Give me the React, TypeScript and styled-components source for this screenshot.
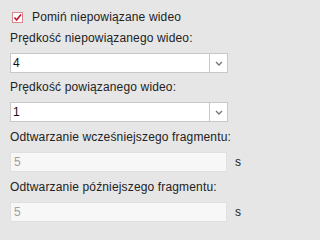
import styled, { createGlobalStyle } from "styled-components";

const GlobalStyle = createGlobalStyle`
  html, body {
    margin: 0;
    padding: 0;
    background: #e6e6e6;
  }
  body {
    font-family: "Liberation Sans", Arial, sans-serif;
    font-size: 12px;
    letter-spacing: 0.15px;
    color: #222;
  }
`;

const Panel = styled.div`
  width: 251px;
  height: 230px;
  box-sizing: border-box;
  padding: 10px 0 0 10px;
  background: #e6e6e6;
`;

const CheckRow = styled.label`
  display: flex;
  align-items: center;
  gap: 9px;
  height: 15px;
  line-height: 15px;
  padding-left: 2px;
  margin-bottom: 6px;
`;

const CheckBox = styled.span`
  position: relative;
  width: 11px;
  height: 11px;
  box-sizing: border-box;
  border: 1px solid #d9888c;
  background: #fff;
  flex-shrink: 0;
`;

const Group = styled.div<{ $top: number }>`
  display: flex;
  flex-direction: column;
  gap: 7px;
  margin-top: ${(p) => p.$top}px;
`;

const Label = styled.div`
  line-height: 15px;
  height: 15px;
  white-space: nowrap;
`;

const Select = styled.div`
  display: flex;
  width: 218px;
  height: 20px;
  box-sizing: border-box;
  border: 1px solid #c8c8c8;
  background: #fff;
`;

const SelectValue = styled.div`
  flex: 1;
  padding-left: 2px;
  line-height: 18px;
  color: #111;
`;

const SelectButton = styled.div`
  width: 17px;
  border-left: 1px solid #c8c8c8;
  display: flex;
  align-items: center;
  justify-content: center;
`;

const InputRow = styled.div`
  display: flex;
  align-items: center;
  gap: 8px;
`;

const TextInput = styled.div`
  width: 217px;
  height: 20px;
  box-sizing: border-box;
  border: 1px solid #e0e0e0;
  background: #f7f7f7;
  padding-left: 3px;
  line-height: 18px;
  color: #a0a0a0;
`;

const Unit = styled.span`
  line-height: 15px;
  color: #222;
`;

const Chevron = () => (
  <svg width="8" height="5" viewBox="0 0 8 5">
    <path d="M1 1 L4 4 L7 1" fill="none" stroke="#777" strokeWidth="1.4" />
  </svg>
);

const Check = () => (
  <svg
    width="11"
    height="11"
    viewBox="0 0 11 11"
    style={{ position: "absolute", left: -1, top: -1 }}
  >
    <path d="M2.5 5.5 L4.6 8 L9 2.5" fill="none" stroke="#c8102e" strokeWidth="1.6" />
  </svg>
);

export default function App() {
  return (
    <>
      <GlobalStyle />
      <Panel>
        <CheckRow>
          <CheckBox>
            <Check />
          </CheckBox>
          Pomiń niepowiązane wideo
        </CheckRow>

        <Group $top={0}>
          <Label>Prędkość niepowiązanego wideo:</Label>
          <Select>
            <SelectValue>4</SelectValue>
            <SelectButton>
              <Chevron />
            </SelectButton>
          </Select>
        </Group>

        <Group $top={7}>
          <Label>Prędkość powiązanego wideo:</Label>
          <Select>
            <SelectValue>1</SelectValue>
            <SelectButton>
              <Chevron />
            </SelectButton>
          </Select>
        </Group>

        <Group $top={8}>
          <Label>Odtwarzanie wcześniejszego fragmentu:</Label>
          <InputRow>
            <TextInput>5</TextInput>
            <Unit>s</Unit>
          </InputRow>
        </Group>

        <Group $top={8}>
          <Label>Odtwarzanie późniejszego fragmentu:</Label>
          <InputRow>
            <TextInput>5</TextInput>
            <Unit>s</Unit>
          </InputRow>
        </Group>
      </Panel>
    </>
  );
}
